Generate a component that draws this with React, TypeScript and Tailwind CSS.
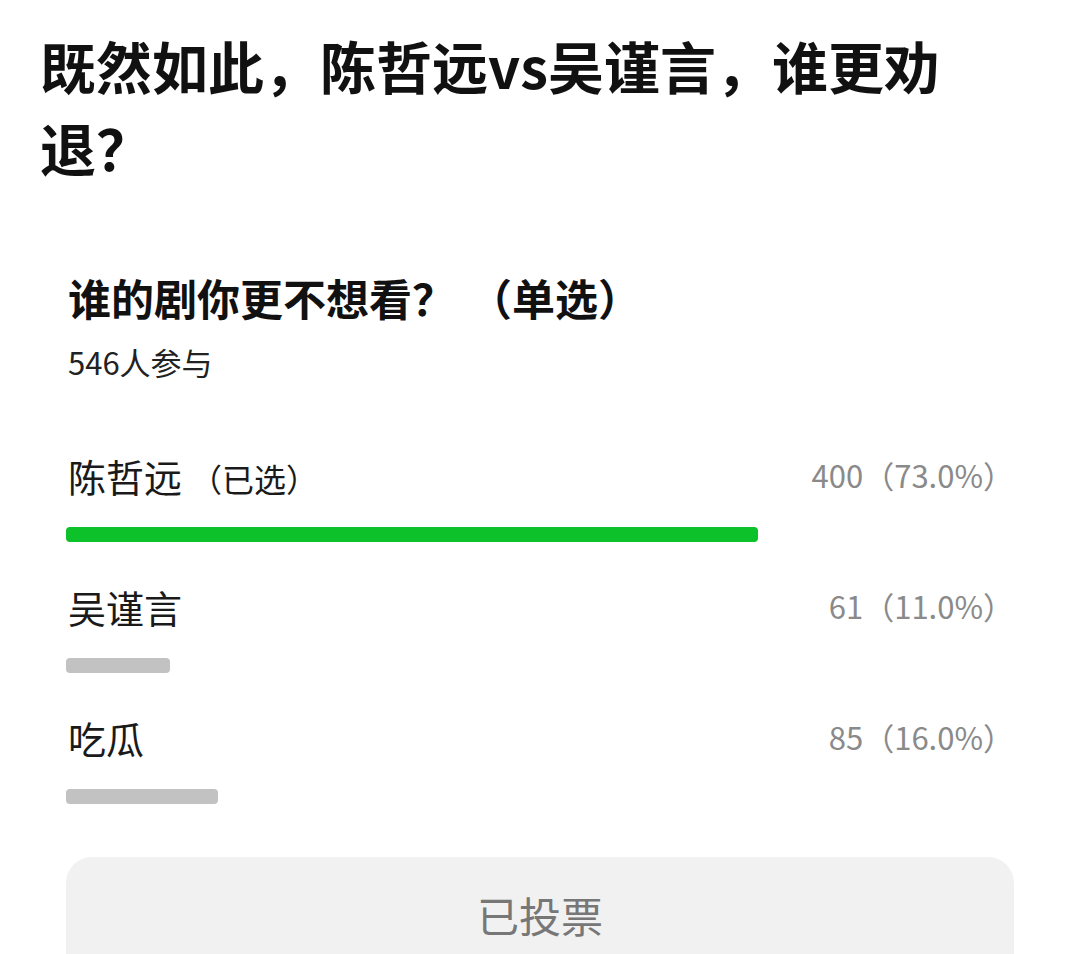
import React from "react";

const options = [
  { name: "陈哲远", selected: true, pct: 73, label: "400（73.0%）" },
  { name: "吴谨言", selected: false, pct: 11, label: "61（11.0%）" },
  { name: "吃瓜", selected: false, pct: 16, label: "85（16.0%）" },
];

export default function App() {
  return (
    <div
      className="w-[1080px] h-[954px] overflow-hidden bg-white"
      style={{ fontFamily: '"Noto Sans CJK SC", "Noto Sans", sans-serif' }}
    >
      <h1 className="pl-[40px] pt-[24px] w-[960px] text-[56px] leading-[82px] font-bold text-[#111111]">
        既然如此，陈哲远vs吴谨言，谁更劝退？
      </h1>
      <div className="px-[66px] pt-[81px]">
        <div className="pl-[2px] text-[43px] leading-[56px] font-bold text-[#111111]">
          谁的剧你更不想看？<span className="ml-[14px]">（单选）</span>
        </div>
        <div className="pl-[2px] mt-[17px] text-[31px] leading-[40px] text-[#222222]">546人参与</div>
        <div className="mt-[68px] flex flex-col gap-[39px]">
          {options.map((o) => (
            <div key={o.name} className="flex flex-col">
              <div className="flex items-center justify-between h-[50px]">
                <span className="pl-[2px] text-[38px] text-[#1a1a1a]">
                  {o.name}
                  {o.selected && <span className="ml-[8px] text-[32px]">（已选）</span>}
                </span>
                <span className="text-[31px] text-[#8a8a8a]">{o.label}</span>
              </div>
              <div className="mt-[27px] h-[15px] w-full">
                <div
                  className={`h-full rounded-[4px] ${o.selected ? "bg-[#0dc12b]" : "bg-[#c2c2c2]"}`}
                  style={{ width: `${o.pct}%` }}
                />
              </div>
            </div>
          ))}
        </div>
        <div className="mt-[53px] h-[130px] rounded-[26px] bg-[#f1f1f1] flex items-start justify-center pt-[28px]">
          <span className="text-[42px] leading-[60px] text-[#777777]">已投票</span>
        </div>
      </div>
    </div>
  );
}
